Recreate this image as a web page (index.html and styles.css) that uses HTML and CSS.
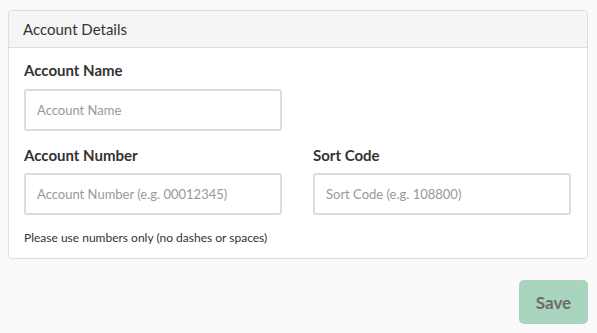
FILE: index.html
```html
<!DOCTYPE html>
<html lang="en">
<head>
  <meta charset="UTF-8">
  <meta name="viewport" content="width=device-width, initial-scale=1.0">
  <title>Account Details</title>
  <link rel="stylesheet" href="styles.css">
</head>
<body>
  <div class="panel">
    <div class="panel-heading">Account Details</div>
    <div class="panel-body">
      <div class="form-group">
        <label for="accountName">Account Name</label>
        <div class="form-row">
          <input type="text" id="accountName" placeholder="Account Name">
        </div>
      </div>

      <div class="form-row">
        <div class="form-group">
          <label for="accountNumber">Account Number</label>
          <input type="text" id="accountNumber" placeholder="Account Number (e.g. 00012345)">
        </div>
        <div class="form-group">
          <label for="sortCode">Sort Code</label>
          <input type="text" id="sortCode" placeholder="Sort Code (e.g. 108800)">
        </div>
      </div>

      <p class="help-text">Please use numbers only (no dashes or spaces)</p>
    </div>
  </div>

  <div class="actions">
    <button id="saveBtn" disabled>Save</button>
  </div>
</body>
</html>
```

FILE: styles.css
```css
:root {
  --text-color: #333;
  --border-color: #ddd;
  --input-border: #dcdcdc;
  --placeholder: #999;
  --heading-bg: #f5f5f5;
  --save-bg: #a9d4be;
}

* {
  box-sizing: border-box;
  margin: 0;
  padding: 0;
}

body {
  font-family: 'Lato', 'Open Sans', sans-serif;
  color: var(--text-color);
  background-color: #fafafa;
  padding: 10px 9px 0 8px;
}

.panel {
  background: white;
  border: 1px solid var(--border-color);
  border-radius: 4px;
}

.panel-heading {
  background: var(--heading-bg);
  border-bottom: 1px solid var(--border-color);
  border-radius: 4px 4px 0 0;
  padding: 10px 14px 10px 14px;
  font-size: 15px;
  line-height: 16px;
}

.panel-body {
  padding: 12px 15px 12px 15px;
}

.form-row {
  display: grid;
  grid-template-columns: 258px 258px;
  column-gap: 31px;
}

.form-group {
  margin-bottom: 14px;
}

.form-row .form-group {
  margin-bottom: 0;
}

label {
  display: block;
  font-size: 15px;
  font-weight: 700;
  line-height: 20px;
  margin-bottom: 9px;
}

.form-row label {
  margin-bottom: 8px;
}

input {
  display: block;
  width: 258px;
  height: 42px;
  padding: 0 11px;
  border: 2px solid var(--input-border);
  border-radius: 3px;
  font-family: inherit;
  font-size: 13px;
  color: var(--text-color);
  background: white;
}

input::placeholder {
  color: var(--placeholder);
}

.help-text {
  margin-top: 14px;
  font-size: 12px;
  line-height: 17px;
}

.actions {
  display: flex;
  justify-content: flex-end;
  padding-top: 21px;
}

button {
  background-color: var(--save-bg);
  color: #6b6b6b;
  border: none;
  border-radius: 5px;
  width: 69px;
  height: 44px;
  font-family: inherit;
  font-size: 17px;
  font-weight: 700;
  cursor: pointer;
}

button:disabled {
  cursor: not-allowed;
}
```
